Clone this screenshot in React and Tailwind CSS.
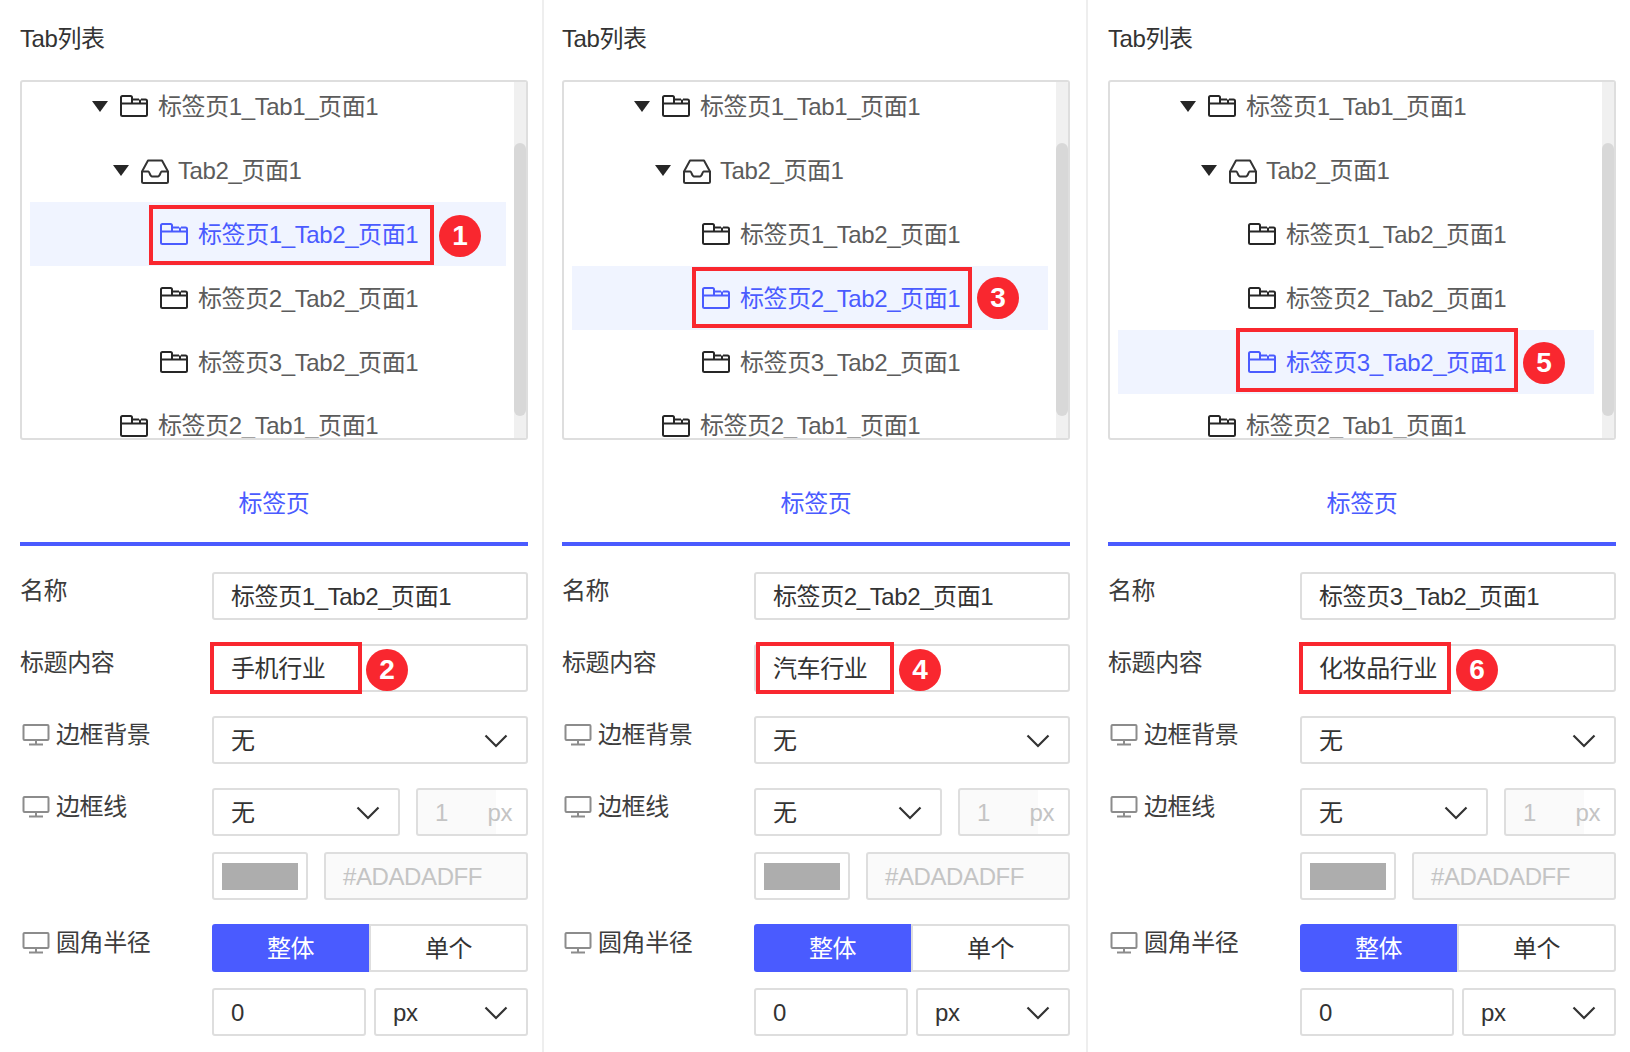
import React from "react";

const F = { fontFamily: '"Liberation Sans", "Noto Sans CJK SC", sans-serif' };

function FolderIcon({ className }) {
  return (
    <svg viewBox="0 0 28 22" className={"h-[22px] w-[28px] shrink-0 " + className} fill="none" stroke="currentColor" strokeWidth="2">
      <path d="M12 8.5V2.5A1.5 1.5 0 0 0 10.5 1H2.5A1.5 1.5 0 0 0 1 2.5v17A1.5 1.5 0 0 0 2.5 21h23a1.5 1.5 0 0 0 1.5-1.5V6a1.5 1.5 0 0 0-1.5-1.5H21" />
      <path d="M1 8.5h26" />
      <path d="M12 4.5h7M20 4.5V8.5" />
    </svg>
  );
}

function InboxIcon() {
  return (
    <svg viewBox="0 0 28 25" className="mt-[2px] h-[25px] w-[28px] shrink-0 text-[#333]" fill="none" stroke="currentColor" strokeWidth="2" strokeLinejoin="round">
      <path d="M1 12.5 7 1.5h14l6 11v10a1.5 1.5 0 0 1-1.5 1.5h-23A1.5 1.5 0 0 1 1 22.5z" />
      <path d="M1 12.5h6.5c1 0 1.5 5 3.5 5h6c2 0 2.5-5 3.5-5H27" />
    </svg>
  );
}

function Caret() {
  return (
    <svg viewBox="0 0 16 11" className="h-[11px] w-[16px] shrink-0 text-[#262626]" fill="currentColor">
      <path d="M0 0h16L8 11z" />
    </svg>
  );
}

function Chevron() {
  return (
    <svg viewBox="0 0 24 14" className="h-[14px] w-[24px] shrink-0 text-[#333]" fill="none" stroke="currentColor" strokeWidth="2.2">
      <path d="M1.5 1.5 12 12 22.5 1.5" />
    </svg>
  );
}

function Monitor() {
  return (
    <svg viewBox="0 0 28 22" className="h-[22px] w-[28px] shrink-0 text-[#8c8c8c]" fill="none" stroke="currentColor" strokeWidth="2">
      <path d="M2.5 1h23a1 1 0 0 1 1 1v13a1 1 0 0 1-1 1h-23a1 1 0 0 1-1-1V2a1 1 0 0 1 1-1z" />
      <path d="M14 16v4.5M7 20.5h14" />
    </svg>
  );
}

function TreeRow({ level, icon, caret, active, last, children }) {
  const pad = level === 1 ? "pl-[90px]" : level === 2 ? "pl-[110px]" : "pl-[130px]";
  const caretPad = level === 1 ? "pl-[62px]" : "pl-[83px]";
  return (
    <div className={"flex h-[64px] items-center gap-[10px] " + (caret ? caretPad : pad) + " " + (active ? "bg-[#f0f4ff] text-[#4a5bff]" : "text-[#5c5c5c]")}>
      {caret && (
        <span className="mr-[2px] flex">
          <Caret />
        </span>
      )}
      {icon === "inbox" ? <InboxIcon /> : <FolderIcon className={active ? "text-[#4a5bff]" : "text-[#262626]"} />}
      <span className={"whitespace-nowrap " + (last ? "" : "pt-[2px] ") + (icon === "inbox" ? "-ml-[1px]" : "")}>{children}</span>
    </div>
  );
}

function Box({ className, children }) {
  return (
    <div className={"flex h-[48px] items-center rounded-[3px] border-2 border-[#dedede] px-[17px] pt-[2px] text-[#333] " + className}>
      {children}
    </div>
  );
}

function SelectBox({ className, children }) {
  return (
    <Box className={"justify-between pr-[18px] " + className}>
      <span>{children}</span>
      <Chevron />
    </Box>
  );
}

function Field({ label, monitor, className, children }) {
  return (
    <div className={"flex " + className}>
      <div className={"flex h-[38px] w-[192px] shrink-0 items-center gap-[6px] text-[#3d3d3d] " + (monitor ? "pl-[2px]" : "")}>
        {monitor && <Monitor />}
        <span>{label}</span>
      </div>
      <div className="flex-1">{children}</div>
    </div>
  );
}

function Badge({ className, children }) {
  return (
    <div className={"absolute flex h-[42px] w-[42px] items-center justify-center rounded-full bg-[#f9272f] text-[28px] font-bold tracking-normal text-white " + className}>
      {children}
    </div>
  );
}

function Panel({ data, className }) {
  return (
    <div className={"relative flex flex-col shrink-0 " + className}>
      <div className="flex h-[78px] items-center text-[#333]">Tab列表</div>

      <div className="mt-[2px] flex h-[360px] overflow-hidden rounded-[3px] border-2 border-[#dedede]">
        <div className="h-full w-[492px] shrink-0 overflow-hidden px-[8px]">
          <div className="-mt-[8px]">
            <TreeRow level={1} caret>标签页1_Tab1_页面1</TreeRow>
            <TreeRow level={2} caret icon="inbox">Tab2_页面1</TreeRow>
            <TreeRow level={3} active={data.active === 1}>标签页1_Tab2_页面1</TreeRow>
            <TreeRow level={3} active={data.active === 2}>标签页2_Tab2_页面1</TreeRow>
            <TreeRow level={3} active={data.active === 3}>标签页3_Tab2_页面1</TreeRow>
            <TreeRow level={1} last>标签页2_Tab1_页面1</TreeRow>
          </div>
        </div>
        <div className="h-full flex-1 bg-[#f0f0f0]">
          <div className="mt-[61px] h-[273px] rounded-full bg-[#d8d8d8]" />
        </div>
      </div>

      <div className="mt-[30px] flex h-[76px] justify-center border-b-4 border-[#4a5bff] pt-[18px] text-[#4a5bff]">
        <span>标签页</span>
      </div>

      <Field label="名称" className="mt-[26px]">
        <Box>{data.name}</Box>
      </Field>
      <Field label="标题内容" className="mt-[24px]">
        <Box>{data.title}</Box>
      </Field>
      <Field label="边框背景" monitor className="mt-[24px]">
        <SelectBox>无</SelectBox>
      </Field>
      <Field label="边框线" monitor className="mt-[24px]">
        <div className="flex gap-[16px]">
          <SelectBox className="w-[188px]">无</SelectBox>
          <Box className="w-[112px] justify-between bg-[linear-gradient(to_right,#fafafa_78px,#ffffff_78px)] pr-[14px] text-[#c4c4c4]">
            <span>1</span>
            <span>px</span>
          </Box>
        </div>
        <div className="mt-[16px] flex gap-[16px]">
          <div className="flex h-[48px] w-[96px] items-center justify-center rounded-[3px] border-2 border-[#dedede]">
            <div className="h-[27px] w-[76px] bg-[#adadad]" />
          </div>
          <Box className="flex-1 bg-[#fafafa] text-[#c4c4c4]">#ADADADFF</Box>
        </div>
      </Field>
      <Field label="圆角半径" monitor className="mt-[24px]">
        <div className="flex h-[48px]">
          <div className="flex w-[157px] items-center justify-center rounded-l-[3px] bg-[#4a5bff] pt-[2px] text-white">整体</div>
          <div className="flex flex-1 items-center justify-center rounded-r-[3px] border-2 border-[#dedede] pt-[2px] text-[#333]">单个</div>
        </div>
        <div className="mt-[16px] flex gap-[8px]">
          <Box className="w-[154px]">0</Box>
          <SelectBox className="w-[154px]">px</SelectBox>
        </div>
      </Field>

      <div className={"pointer-events-none absolute border-4 border-[#f9272f] " + data.box1} />
      <Badge className={data.badge1}>{data.n1}</Badge>
      <div className={"pointer-events-none absolute border-4 border-[#f9272f] " + data.box2} />
      <Badge className={data.badge2}>{data.n2}</Badge>
    </div>
  );
}

const panels = [
  {
    active: 1, name: "标签页1_Tab2_页面1", title: "手机行业", n1: 1, n2: 2,
    box1: "left-[129px] top-[205px] h-[60px] w-[285px]",
    badge1: "left-[419px] top-[215px]",
    box2: "left-[190px] top-[642px] h-[52px] w-[152px]",
    badge2: "left-[346px] top-[649px]",
  },
  {
    active: 2, name: "标签页2_Tab2_页面1", title: "汽车行业", n1: 3, n2: 4,
    box1: "left-[130px] top-[267px] h-[61px] w-[280px]",
    badge1: "left-[415px] top-[277px]",
    box2: "left-[194px] top-[642px] h-[52px] w-[138px]",
    badge2: "left-[337px] top-[649px]",
  },
  {
    active: 3, name: "标签页3_Tab2_页面1", title: "化妆品行业", n1: 5, n2: 6,
    box1: "left-[128px] top-[328px] h-[64px] w-[282px]",
    badge1: "left-[415px] top-[342px]",
    box2: "left-[191px] top-[642px] h-[52px] w-[152px]",
    badge2: "left-[348px] top-[649px]",
  },
];

export default function App() {
  return (
    <div className="flex h-[1052px] w-[1630px] overflow-hidden bg-white text-[24px] leading-[32px] tracking-[-0.4px]" style={F}>
      <div className="flex w-[544px] shrink-0 border-r-2 border-[#eeeeee] pl-[20px]">
        <Panel data={panels[0]} className="w-[508px]" />
      </div>
      <div className="flex w-[544px] shrink-0 border-r-2 border-[#eeeeee] pl-[18px]">
        <Panel data={panels[1]} className="w-[508px]" />
      </div>
      <div className="flex flex-1 pl-[20px]">
        <Panel data={panels[2]} className="w-[508px]" />
      </div>
    </div>
  );
}
